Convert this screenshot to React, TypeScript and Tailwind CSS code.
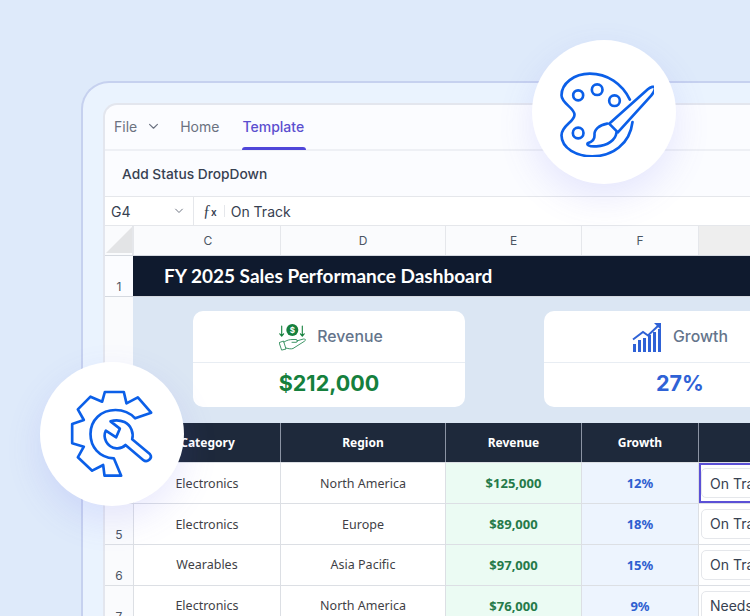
const rows = [
  { num: "", category: "Electronics", region: "North America", revenue: "$125,000", growth: "12%", status: "On Track" },
  { num: "5", category: "Electronics", region: "Europe", revenue: "$89,000", growth: "18%", status: "On Track" },
  { num: "6", category: "Wearables", region: "Asia Pacific", revenue: "$97,000", growth: "15%", status: "On Track" },
  { num: "7", category: "Electronics", region: "North America", revenue: "$76,000", growth: "9%", status: "Needs Review" },
];

const gridCols = "grid grid-cols-[29px_147px_165px_136px_117px_120px]";

function Chevron({ className }: { className: string }) {
  return (
    <svg className={className} viewBox="0 0 12 8" fill="none" stroke="currentColor" strokeWidth="1.3">
      <path d="M1.5 1.5 6 6l4.5-4.5" strokeLinecap="round" strokeLinejoin="round" />
    </svg>
  );
}

function PaletteIcon() {
  return (
    <svg className="h-[90px] w-[99px]" viewBox="133.500 140 297 270" fill="none" stroke="#0b5fe8" strokeWidth="8" strokeLinecap="round" strokeLinejoin="round">
      <path d="M358 238C335 190 290 160 238 160C190 160 153 190 153 225C153 250 192 262 192 283C192 305 153 315 153 345C153 385 200 408 245 408C305 408 358 372 366 305" />
      <circle cx="203" cy="225" r="15" />
      <circle cx="260" cy="208" r="16" />
      <circle cx="312" cy="241" r="16" />
      <circle cx="203" cy="338" r="16" />
      <path d="M296 310 412 207C420 200 432 196 433 203C434 210 428 218 422 226L322 336Z" />
      <path d="M290 310C266 314 250 328 252 345C253 358 244 364 233 368C226 372 234 380 258 378C292 376 316 358 318 336" />
    </svg>
  );
}

function GearIcon() {
  return (
    <svg className="h-[90px] w-[87px]" viewBox="115.500 117 261 270" fill="none" stroke="#0b5fe8" strokeWidth="8" strokeLinecap="round" strokeLinejoin="round">
      <path d="M314 205 362 188 322 142 288 160 280 126H223L215 155 180 140 142 178 160 210 125 222V280L160 290 142 322 185 362 218 345 222 377H272L250 325C205 322 180 290 180 252C180 210 212 180 255 180C280 180 300 190 314 205Z" />
      <path d="M240 214 268 236 257 262 226 242C216 262 228 292 258 295C268 296 278 292 285 285L338 330C350 340 368 324 358 312L305 268C310 250 302 225 282 216C268 210 252 210 240 214Z" />
    </svg>
  );
}

function HandCoinIcon() {
  return (
    <svg className="ml-[4px] h-[27px] w-[27px]" viewBox="0 0 27 27" fill="none" stroke="#2a8a57" strokeWidth="0.9" strokeLinecap="round" strokeLinejoin="round">
      <circle cx="13.300" cy="6" r="6" fill="#15803d" stroke="none" />
      <text x="13.300" y="9" textAnchor="middle" fontSize="8" fontWeight="700" fill="#ffffff" stroke="none" fontFamily="Inter, sans-serif">$</text>
      <path d="M2.700 2v10M0.800 9.800l1.900 2.400 1.900-2.400M23.300 2v10M21.400 9.800l1.900 2.400 1.900-2.400" stroke="#15803d" strokeWidth="1.100" />
      <path d="M0.500 18.500 4.500 17 7 25 3 26ZM5 18c3-2 6-2.500 9-2.500h3c2 0 2 2.800 0 2.800h-4M17.500 17l7-2c2-.5 2.500 1.500 1 2.200L14 24.500c-2 .7-4 .3-7-.5" />
    </svg>
  );
}

function GrowthIcon() {
  return (
    <svg className="h-[30px] w-[30px]" viewBox="0 0 30 30" fill="#2f62d6" stroke="none">
      <rect x="1" y="22" width="3" height="8" />
      <rect x="6" y="18" width="3" height="12" />
      <rect x="11" y="16" width="3" height="14" />
      <rect x="16" y="13" width="3" height="17" />
      <rect x="21" y="10" width="3" height="20" />
      <rect x="26" y="7" width="3" height="23" />
      <path d="M1 17.500 11 10l5 3.500L27 3" fill="none" stroke="#2f62d6" strokeWidth="2" />
      <path d="M22 1h7v7z" />
    </svg>
  );
}

function KpiCard({ icon, label, value, valueClass }: { icon: React.ReactNode; label: string; value: string; valueClass: string }) {
  return (
    <div className="h-[96px] w-[272px] shrink-0 rounded-[10px] bg-white">
      <div className="flex h-[52px] items-center justify-center gap-[11px] border-b border-[#e8edf3] pt-[1px]">
        {icon}
        <span className="text-[15.800px] font-medium text-[#64748b]">{label}</span>
      </div>
      <div className={`flex h-[44px] items-center justify-center pb-[4px] text-[21.500px] font-bold ${valueClass}`}>{value}</div>
    </div>
  );
}

export default function App() {
  return (
    <div className="relative h-[616px] w-[750px] overflow-hidden bg-[#deeafa] pl-[81px] pt-[81px] font-['Inter',sans-serif]">
      {/* outer panel */}
      <div className="h-[640px] w-[760px] rounded-tl-[28px] border-l-2 border-t-2 border-[#c6d1ef] bg-[#eaf3fe] pl-[20px] pt-[20px]">
        {/* sheet */}
        <div className="h-[620px] w-[740px] rounded-tl-[14px] border-l-2 border-t-2 border-[#e3e6ee] bg-[#fbfcff]">
          {/* tabs */}
          <div className="flex h-[46px] border-b-2 border-[#eef0f5] pl-[9px] text-[14px]">
            <div className="flex items-center gap-[11px] pb-[2px] text-[#6b7280]">
              File
              <Chevron className="h-[7px] w-[11px]" />
            </div>
            <div className="ml-[21px] flex items-center pb-[1px] text-[#6b7280]">Home</div>
            <div className="relative ml-[23px] flex items-center pb-[1px] font-medium text-[#5b4fcf]">
              Template
              <span className="absolute bottom-[-1px] left-0 h-[3px] w-[64px] rounded-t-[3px] bg-[#4f46d9]" />
            </div>
          </div>

          {/* toolbar */}
          <div className="flex h-[46px] items-center border-b border-[#e5e7eb] pl-[17px] pt-[2px] text-[13.750px] font-medium text-[#374151]">
            Add Status DropDown
          </div>

          {/* formula bar */}
          <div className="flex h-[29px] items-center border-b border-[#e5e7eb] bg-white text-[14px] text-[#374151]">
            <div className="flex h-full w-[89px] items-center justify-between border-r border-[#e5e7eb] pl-[6px] pr-[9px]">
              G4
              <Chevron className="h-[6px] w-[10px] text-[#6b7280]" />
            </div>
            <span className="ml-[9px] font-['Liberation_Serif',serif] text-[16px] font-medium text-[#374151]">ƒ<span className="font-['Inter',sans-serif] text-[10px] font-semibold">x</span></span>
            <span className="ml-[7px] mr-[6px] h-[12px] w-px bg-[#e5e7eb]" />
            On Track
          </div>

          {/* column headers */}
          <div className={`${gridCols} h-[29px] bg-[#fafbfd] text-[12px] text-[#4b5563]`}>
            <div className="flex items-end border-r-2 border-[#e5e7eb] pb-[2px] pl-[1px]">
              <span className="h-[26px] w-[26px] bg-[#e3e4e6] [clip-path:polygon(100%_0,100%_100%,0_100%)]" />
            </div>
            <div className="flex items-center justify-center border-r border-[#e5e7eb] pl-[2px]">C</div>
            <div className="flex items-center justify-center border-r border-[#e5e7eb]">D</div>
            <div className="flex items-center justify-center border-r border-[#e5e7eb]">E</div>
            <div className="flex items-center justify-center border-r border-[#e5e7eb]">F</div>
            <div className="bg-[#eeeeee]" />
          </div>

          {/* title row */}
          <div className="flex h-[41px] border-t border-[#d5d9e0]">
            <div className="flex w-[28px] items-end justify-center text-[12px] text-[#4b5563]">1</div>
            <div className="flex flex-1 items-center bg-[#0f1a2e] pl-[31px] font-['Lato',sans-serif] text-[19px] font-bold text-white">
              FY 2025 Sales Performance Dashboard
            </div>
          </div>

          {/* kpi band */}
          <div className="flex h-[127px] border-t border-[#d5d9e0]">
            <div className="w-[28px] shrink-0 bg-[#fafbfd]" />
            <div className="flex flex-1 items-start gap-[79px] bg-[#dbe6f3] pl-[60px] pt-[14px]">
              <KpiCard icon={<HandCoinIcon />} label="Revenue" value="$212,000" valueClass="text-[#15803d]" />
              <KpiCard icon={<GrowthIcon />} label="Growth" value="27%" valueClass="text-[#2f62d6]" />
            </div>
          </div>

          {/* table header */}
          <div className={`${gridCols} h-[39px] text-[12px] font-bold text-white [font-family:'Noto_Sans',sans-serif]`}>
            <div className="bg-[#fafbfd]" />
            <div className="flex items-center justify-center border-r border-[#8b93a3] bg-[#1e293b] pl-[1px] pt-[1px]">Category</div>
            <div className="flex items-center justify-center border-r border-[#8b93a3] bg-[#1e293b] pt-[1px]">Region</div>
            <div className="flex items-center justify-center border-r border-[#8b93a3] bg-[#1e293b] pt-[1px]">Revenue</div>
            <div className="flex items-center justify-center border-r border-[#8b93a3] bg-[#1e293b] pt-[1px]">Growth</div>
            <div className="bg-[#1e293b]" />
          </div>

          {/* data rows */}
          {rows.map((row, i) => (
            <div key={i} className={`${gridCols} h-[41px] border-t border-[#dcdfe4] bg-white text-[12.500px] text-[#3f3f46] [font-family:'Noto_Sans',sans-serif]`}>
              <div className="flex items-end justify-center border-r border-[#dcdfe4] bg-[#fafbfd] font-['Inter',sans-serif] text-[12px] text-[#4b5563]">{row.num}</div>
              <div className={`flex items-center justify-center border-r border-[#dcdfe4] ${i < 2 ? "pt-[2px]" : ""}`}>{row.category}</div>
              <div className={`flex items-center justify-center border-r border-[#dcdfe4] ${i < 2 ? "pt-[2px]" : ""}`}>{row.region}</div>
              <div className="flex items-center justify-center border-r border-[#dcdfe4] bg-[#ebfbf3] pt-[1px] text-[13px] font-bold text-[#257a49]">{row.revenue}</div>
              <div className="flex items-center justify-center border-r border-[#dcdfe4] bg-[#edf4fe] pt-[1px] text-[13px] font-bold text-[#2f5fd0]">{row.growth}</div>
              <div className={i === 0 ? "flex items-center border-2 border-[#5b50d6]" : "flex items-center pb-[1px] pl-[2px]"}>
                <div className="flex h-[30px] w-[200px] shrink-0 items-center rounded-[5px] border border-[#e5e7eb] bg-white pl-[8px] font-['Inter',sans-serif] text-[14px] text-[#374151]">
                  {row.status}
                </div>
              </div>
            </div>
          ))}
        </div>
      </div>

      {/* floating icon badges */}
      <div className="absolute left-[532px] top-[40px] flex h-[144px] w-[144px] items-center justify-center rounded-full bg-white shadow-[0_14px_36px_rgba(99,102,241,0.14)]">
        <PaletteIcon />
      </div>
      <div className="absolute left-[40px] top-[362px] flex h-[144px] w-[144px] items-center justify-center rounded-full bg-white shadow-[0_14px_36px_rgba(99,102,241,0.14)]">
        <GearIcon />
      </div>
    </div>
  );
}
